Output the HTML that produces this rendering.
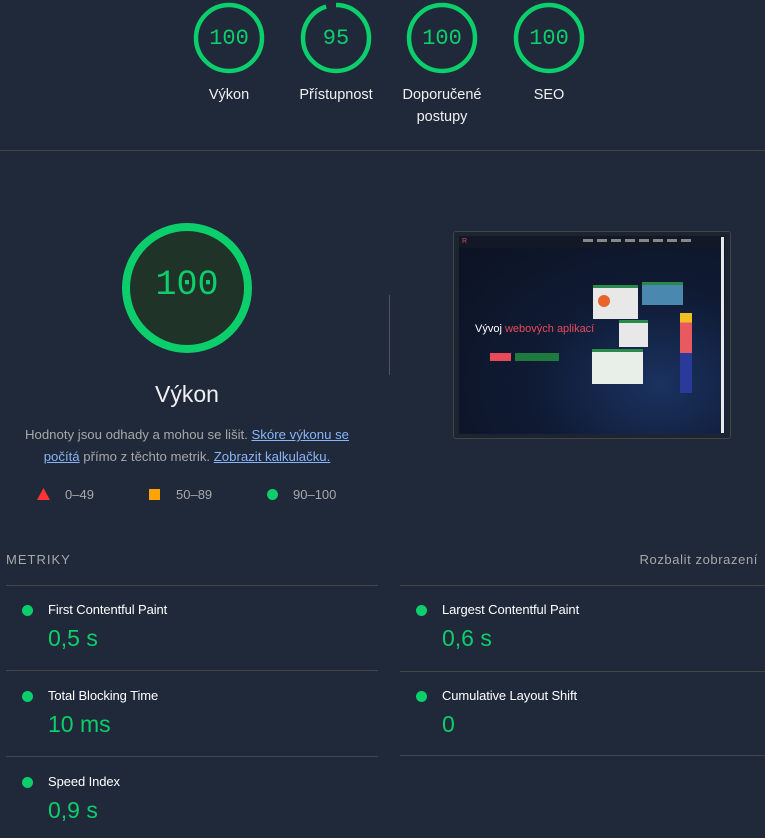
<!DOCTYPE html>
<html><head><meta charset="utf-8"><style>
*{margin:0;padding:0;box-sizing:border-box}
body{width:765px;height:838px;background:#1f293a;font-family:"Liberation Sans",sans-serif;position:relative;overflow:hidden;color:#e8e8e8}
.a{position:absolute}
.g{position:absolute;width:72px;height:72px}
.gn{position:absolute;font-family:"Liberation Mono",monospace;color:#0cce6b;font-size:22px;width:72px;text-align:center;top:24px;left:0}
.lab{position:absolute;font-size:14.5px;color:#f0f0f0;text-align:center;width:110px;line-height:22px}
.hl{position:absolute;height:1px;background:#454545}
.dot{position:absolute;width:11px;height:11px;border-radius:50%;background:#0cce6b}
.mt{position:absolute;font-size:13px;color:#fff;font-weight:500;letter-spacing:-.1px}
.mv{position:absolute;font-size:23px;color:#0cce6b}
a{color:#8ab4f8;text-decoration:underline}
</style></head><body>
<div class="g" style="left:193px;top:2px"><svg width="72" height="72"><circle cx="36" cy="36" r="33" fill="none" stroke="#0cce6b" stroke-width="4.5"/></svg><div class="gn">100</div></div>
<div class="g" style="left:300px;top:2px"><svg width="72" height="72"><circle cx="36" cy="36" r="33" fill="none" stroke="#0cce6b" stroke-width="4.5" stroke-dasharray="197 10.4" transform="rotate(-90 36 36)"/></svg><div class="gn">95</div></div>
<div class="g" style="left:406px;top:2px"><svg width="72" height="72"><circle cx="36" cy="36" r="33" fill="none" stroke="#0cce6b" stroke-width="4.5"/></svg><div class="gn">100</div></div>
<div class="g" style="left:513px;top:2px"><svg width="72" height="72"><circle cx="36" cy="36" r="33" fill="none" stroke="#0cce6b" stroke-width="4.5"/></svg><div class="gn">100</div></div>
<div class="lab" style="left:174px;top:84px">Výkon</div>
<div class="lab" style="left:281px;top:84px">Přístupnost</div>
<div class="lab" style="left:387px;top:84px">Doporučené<br>postupy</div>
<div class="lab" style="left:494px;top:84px">SEO</div>
<div class="hl" style="left:0;top:150px;width:765px"></div>

<svg class="a" style="left:120px;top:221px" width="134" height="134"><circle cx="67" cy="67" r="61" fill="#1f3329" stroke="#0cce6b" stroke-width="8"/></svg>
<div class="a" style="left:120px;top:265px;width:134px;text-align:center;font-family:'Liberation Mono',monospace;font-size:35px;color:#0cce6b">100</div>
<div class="a" style="left:100px;top:381px;width:174px;text-align:center;font-size:23px;color:#f0f0f0">Výkon</div>
<div class="a" style="left:18px;top:424px;width:338px;text-align:center;font-size:13.2px;line-height:22px;color:#a8a8a8">Hodnoty jsou odhady a mohou se lišit. <a>Skóre výkonu se počítá</a> přímo z těchto metrik. <a>Zobrazit kalkulačku.</a></div>
<svg class="a" style="left:37px;top:488px" width="13" height="12"><polygon points="6.5,0 13,12 0,12" fill="#ff3333"/></svg>
<div class="a" style="left:65px;top:487px;font-size:13px;color:#a8a8a8">0–49</div>
<div class="a" style="left:149px;top:489px;width:11px;height:11px;background:#ffa400"></div>
<div class="a" style="left:176px;top:487px;font-size:13px;color:#a8a8a8">50–89</div>
<div class="dot" style="left:267px;top:489px"></div>
<div class="a" style="left:293px;top:487px;font-size:13px;color:#a8a8a8">90–100</div>
<div class="a" style="left:389px;top:295px;width:1px;height:80px;background:#555"></div>

<div class="a" style="left:453px;top:231px;width:278px;height:208px;border:1px solid #444;border-radius:3px;background:#1c2331"></div>
<div class="a" style="left:459px;top:236px;width:266px;height:198px;background:radial-gradient(ellipse at 75% 75%,#1a3260 0%,#0f1a33 45%,#0c1222 100%)"></div>
<div class="a" style="left:459px;top:236px;width:266px;height:12px;background:#121826"></div>
<div class="a" style="left:462px;top:238px;font-size:7px;color:#e04a5a">R</div>
<div class="a" style="left:583px;top:239px;width:110px;height:3px;background:repeating-linear-gradient(90deg,#888 0 10px,transparent 10px 14px)"></div>
<div class="a" style="left:721px;top:237px;width:3px;height:196px;background:#e8e8e8"></div>
<div class="a" style="left:475px;top:323px;font-size:11px;color:#fff">Vývoj <span style="color:#e84a5a">webových aplikací</span></div>
<div class="a" style="left:490px;top:353px;width:21px;height:8px;background:#e84a5a"></div>
<div class="a" style="left:515px;top:353px;width:44px;height:8px;background:#1e7a3e"></div>
<div class="a" style="left:593px;top:285px;width:45px;height:34px;background:#e8e8e8;border-top:3px solid #2a8a4a"></div>
<div class="a" style="left:598px;top:295px;width:12px;height:12px;border-radius:50%;background:#e8642a"></div>
<div class="a" style="left:642px;top:282px;width:41px;height:23px;background:#4a88b0;border-top:3px solid #2a8a4a"></div>
<div class="a" style="left:619px;top:320px;width:29px;height:27px;background:#e8e8e8;border-top:3px solid #2a8a4a"></div>
<div class="a" style="left:592px;top:349px;width:51px;height:35px;background:#e8eee8;border-top:3px solid #2a8a4a"></div>
<div class="a" style="left:680px;top:313px;width:12px;height:80px;background:linear-gradient(#f0c020 0 12%,#e85a60 12% 50%,#2a3a9a 50%)"></div>

<div class="a" style="left:6px;top:552px;font-size:13px;letter-spacing:1px;color:#a8a8a8">METRIKY</div>
<div class="a" style="right:7px;top:552px;font-size:13px;letter-spacing:.6px;color:#a8a8a8">Rozbalit zobrazení</div>
<div class="hl" style="left:6px;top:585px;width:372px"></div>
<div class="hl" style="left:400px;top:585px;width:365px"></div>
<div class="hl" style="left:6px;top:670px;width:372px"></div>
<div class="hl" style="left:400px;top:671px;width:365px"></div>
<div class="hl" style="left:6px;top:756px;width:372px"></div>
<div class="hl" style="left:400px;top:755px;width:365px"></div>

<div class="dot" style="left:22px;top:605px"></div><div class="mt" style="left:48px;top:602px">First Contentful Paint</div><div class="mv" style="left:48px;top:625px">0,5 s</div>
<div class="dot" style="left:416px;top:605px"></div><div class="mt" style="left:442px;top:602px">Largest Contentful Paint</div><div class="mv" style="left:442px;top:625px">0,6 s</div>
<div class="dot" style="left:22px;top:691px"></div><div class="mt" style="left:48px;top:688px">Total Blocking Time</div><div class="mv" style="left:48px;top:711px">10 ms</div>
<div class="dot" style="left:416px;top:691px"></div><div class="mt" style="left:442px;top:688px">Cumulative Layout Shift</div><div class="mv" style="left:442px;top:711px">0</div>
<div class="dot" style="left:22px;top:777px"></div><div class="mt" style="left:48px;top:774px">Speed Index</div><div class="mv" style="left:48px;top:797px">0,9 s</div>
</body></html>
